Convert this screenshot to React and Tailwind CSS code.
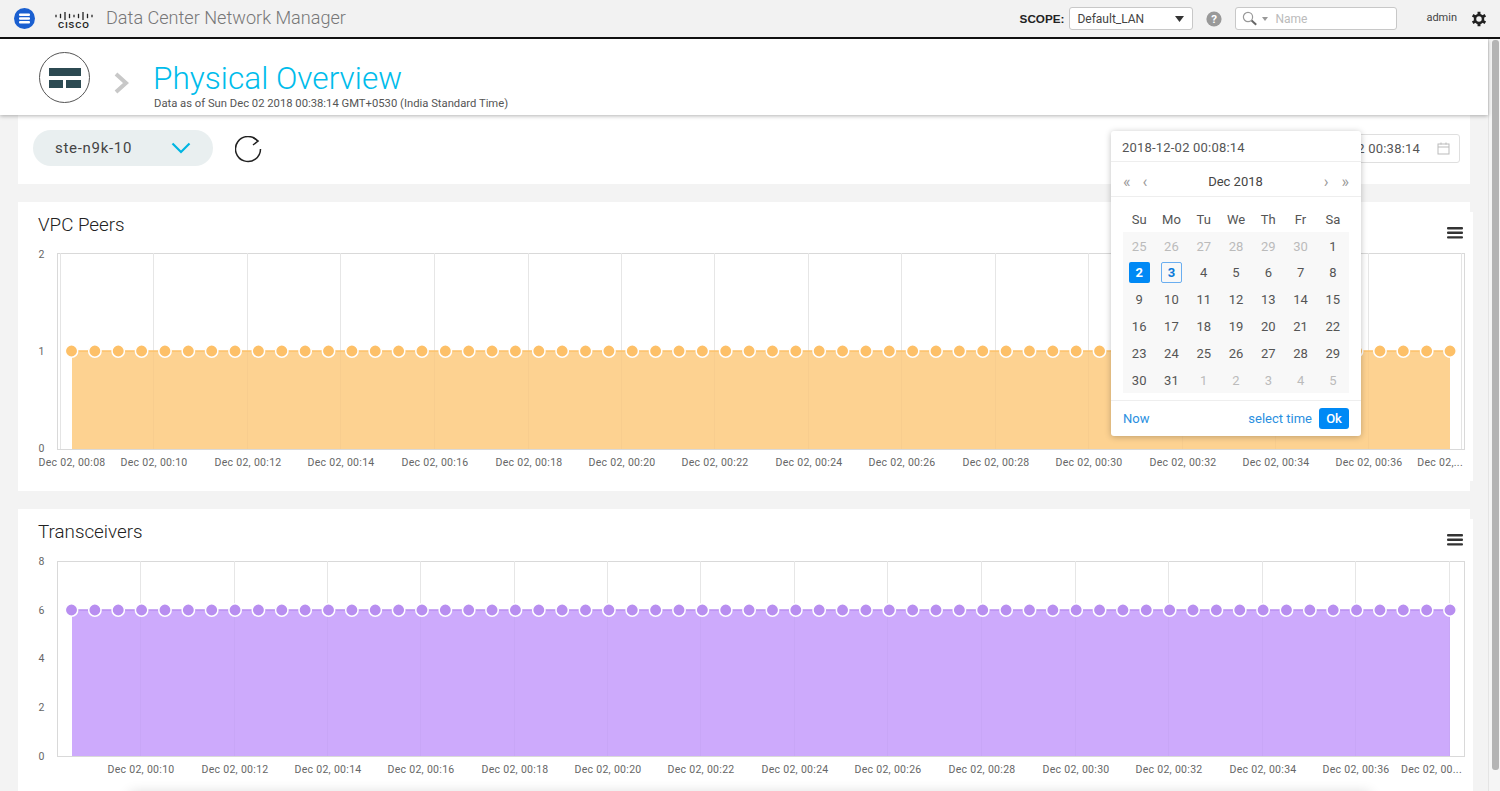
import React from "react";

const FONT = { fontFamily: "Roboto, 'Liberation Sans', sans-serif" };
const points = Array.from({ length: 60 }, (_, i) => 71.5 + i * 23.365);

const calendar = [
  [["25", 1], ["26", 1], ["27", 1], ["28", 1], ["29", 1], ["30", 1], ["1", 0]],
  [["2", 2], ["3", 3], ["4", 0], ["5", 0], ["6", 0], ["7", 0], ["8", 0]],
  [["9", 0], ["10", 0], ["11", 0], ["12", 0], ["13", 0], ["14", 0], ["15", 0]],
  [["16", 0], ["17", 0], ["18", 0], ["19", 0], ["20", 0], ["21", 0], ["22", 0]],
  [["23", 0], ["24", 0], ["25", 0], ["26", 0], ["27", 0], ["28", 0], ["29", 0]],
  [["30", 0], ["31", 0], ["1", 1], ["2", 1], ["3", 1], ["4", 1], ["5", 1]],
];

function Hamburger() {
  return (
    <svg width="16" height="12" viewBox="0 0 16 12" className="mt-[15px] mr-[10px] shrink-0">
      <rect x="0" y="0" width="16" height="2.4" rx="1" fill="#333" />
      <rect x="0" y="4.6" width="16" height="2.4" rx="1" fill="#333" />
      <rect x="0" y="9.2" width="16" height="2.4" rx="1" fill="#333" />
    </svg>
  );
}

function Chart({ title, viewY, height, top, bottom, lineY, yTicks, grid, labels, labelY, area, dot, innerLines }) {
  return (
    <section className="py-[10px] bg-white h-fit">
      <div className="w-[1455px] bg-white">
        <div className="h-[33px] flex justify-between pl-[20px]">
          <h2 className="text-[18.8px] font-light text-[#222] leading-[27px]">{title}</h2>
          <Hamburger />
        </div>
        <svg width="1455" height={height} viewBox={`18 ${viewY} 1455 ${height}`} className="block">
          <rect x="57.5" y={top + 0.5} width="1407" height={bottom - top} fill="#fff" stroke="#d9d9d9" />
          {innerLines && (
            <>
              <line x1="60.5" x2="60.5" y1={top} y2={bottom} stroke="#e4e4e4" />
              <line x1="1461.5" x2="1461.5" y1={top} y2={bottom} stroke="#e4e4e4" />
            </>
          )}
          {grid.map((x) => (
            <line key={x} x1={x + 0.5} x2={x + 0.5} y1={top} y2={bottom} stroke="#e6e6e6" />
          ))}
          <rect x="72" y={lineY} width="1378" height={bottom - lineY} fill={area} />
          {grid.map((x) => (
            <line key={`g${x}`} x1={x + 0.5} x2={x + 0.5} y1={lineY} y2={bottom} stroke="#000" strokeOpacity="0.02" />
          ))}
          <line x1="72" x2="1450" y1={lineY} y2={lineY} stroke={dot} strokeWidth="1.5" />
          {points.map((x) => (
            <circle key={x} cx={x} cy={lineY} r="6.2" fill={dot} stroke="#fff" strokeWidth="1.5" />
          ))}
          {yTicks.map(([t, y]) => (
            <text key={t} x="41.5" y={y + 3.5} textAnchor="middle" fill="#666" fontSize="10.5">
              {t}
            </text>
          ))}
          {labels.map(([t, x, anchor]) => (
            <text key={x} x={x} y={labelY} textAnchor={anchor || "middle"} fill="#666" fontSize="10.5" letterSpacing="0.3">
              {t}
            </text>
          ))}
        </svg>
      </div>
    </section>
  );
}

const grid1 = [153, 247, 340, 434, 528, 621, 714, 808, 901, 995, 1088, 1182, 1275, 1368];
const grid2 = [140, 234, 327, 420, 514, 607, 700, 794, 887, 981, 1075, 1168, 1262, 1355, 1449];
const times = ["00:10", "00:12", "00:14", "00:16", "00:18", "00:20", "00:22", "00:24", "00:26", "00:28", "00:30", "00:32", "00:34", "00:36"];

const labels1 = [
  ["Dec 02, 00:08", 72],
  ...times.map((t, i) => [`Dec 02, ${t}`, i === 13 ? 1369 : grid1[i] + 1]),
  ["Dec 02,...", 1463, "end"],
];
const labels2 = [
  ...times.map((t, i) => [`Dec 02, ${t}`, grid2[i] + 1]),
  ["Dec 02, 00...", 1462, "end"],
];

const ciscoBars = [2.6, 4.4, 8, 4.4, 2.6, 4.4, 8, 4.4, 2.6];

export default function App() {
  return (
    <div style={FONT} className="w-[1500px] h-[791px] overflow-hidden flex flex-col bg-[#f3f3f3] relative">
      <header className="h-[39px] shrink-0 bg-[#f2f2f2] border-b-2 border-[#111] flex items-center pl-[14px] pr-[13px]">
        <svg width="21" height="21" viewBox="0 0 21 21" className="shrink-0 mb-[1px]">
          <circle cx="10.5" cy="10.5" r="10.5" fill="#1a5fd0" />
          <rect x="5" y="5.500" width="11" height="2.500" rx="1" fill="#fff" />
          <rect x="5" y="9.300" width="11" height="2.500" rx="1" fill="#fff" />
          <rect x="5" y="13.100" width="11" height="2.500" rx="1" fill="#fff" />
        </svg>
        <div className="relative w-[40px] h-[24px] ml-[20px] shrink-0">
          <svg width="38" height="12" viewBox="0 0 38 12" className="absolute left-0 top-[3px]">
            {ciscoBars.map((h, i) => (
              <line key={i} x1={1 + i * 4.5} x2={1 + i * 4.5} y1={6 - h / 2} y2={6 + h / 2} stroke="#222" strokeWidth="1.3" />
            ))}
          </svg>
          <span className="absolute left-[3px] top-[13px] text-[8.5px] leading-[10px] font-bold text-[#222] tracking-[1px]" style={{ fontFamily: "'Liberation Sans', sans-serif" }}>
            CISCO
          </span>
        </div>
        <span className="ml-[11px] text-[18.1px] font-light text-[#777] leading-none">Data Center Network Manager</span>
        <div className="ml-auto flex items-center">
          <span className="text-[11.7px] font-bold text-[#222]" style={{ fontFamily: "'Liberation Sans', sans-serif" }}>SCOPE:</span>
          <div className="ml-[5px] w-[124px] h-[23px] bg-white border border-[#c8c8c8] rounded-[3px] flex items-center justify-between pl-[7px] pr-[8px]">
            <span className="text-[12px] text-[#444]">Default_LAN</span>
            <svg width="9" height="6" viewBox="0 0 9 6"><path d="M0 0h9L4.500 6z" fill="#333" /></svg>
          </div>
          <svg width="16" height="16" viewBox="0 0 16 16" className="ml-[13px]">
            <circle cx="8" cy="8" r="7.600" fill="#999" />
            <text x="8" y="12" textAnchor="middle" fontSize="11.5" fontWeight="700" fill="#fff">?</text>
          </svg>
          <div className="ml-[13px] w-[162px] h-[23px] bg-white border border-[#c8c8c8] rounded-[3px] flex items-center pl-[6px]">
            <svg width="16" height="16" viewBox="0 0 16 16">
              <circle cx="6" cy="6" r="4.600" fill="none" stroke="#999" strokeWidth="1.2" />
              <path d="M9.600 9.600l4.600 4.200" stroke="#666" strokeWidth="2" />
            </svg>
            <svg width="6" height="4" viewBox="0 0 6 4" className="ml-[4px]"><path d="M0 0h6L3 4z" fill="#999" /></svg>
            <span className="ml-[7px] text-[12px] text-[#bbb]">Name</span>
          </div>
          <span className="ml-[29px] text-[11px] text-[#444]">admin</span>
          <svg width="16" height="16" viewBox="0 0 24 24" className="ml-[14px]" fill="none" stroke="#222">
            <circle cx="12" cy="12" r="6" strokeWidth="3.800" />
            <path d="M12 1v5M12 18v5M2.500 6.500l4.300 2.500M17.200 15l4.300 2.500M2.500 17.500L6.800 15M17.200 9l4.300-2.500" strokeWidth="4.400" />
          </svg>
        </div>
      </header>

      <div className="flex-1 flex overflow-hidden">
        <main className="w-[1488px] shrink-0 flex flex-col relative">
          <div className="h-[76px] shrink-0 bg-white shadow-[0_1px_4px_rgba(0,0,0,0.3)] flex relative z-10 pl-[39px]">
            <div className="w-[51px] h-[51px] mt-[13px] rounded-full border border-[#555] flex flex-col items-center justify-center gap-[4px] shrink-0">
              <div className="w-[32px] h-[8px] bg-[#2c4a52]" />
              <div className="flex gap-[3px]">
                <div className="w-[14px] h-[8px] bg-[#2c4a52]" />
                <div className="w-[15px] h-[8px] bg-[#2c4a52]" />
              </div>
            </div>
            <svg width="16" height="22" viewBox="0 0 16 22" className="ml-[24px] mt-[33px] shrink-0">
              <path d="M2 2l10 9-10 9" fill="none" stroke="#c8c8c8" strokeWidth="4" />
            </svg>
            <div className="ml-[23px] pt-[21px]">
              <h1 className="text-[31.6px] font-light leading-[38px] text-[#00bceb]">Physical Overview</h1>
              <p className="ml-[1px] text-[11.25px] leading-[12px] text-[#555]">Data as of Sun Dec 02 2018 00:38:14 GMT+0530 (India Standard Time)</p>
            </div>
          </div>

          <div className="pl-[18px] w-[1470px] flex flex-col gap-[18px]">
            <section className="h-[69px] bg-white flex items-start relative">
              <div className="ml-[15px] mt-[15px] w-[180px] h-[36px] rounded-full bg-[#e9eff0] flex items-center justify-between pl-[22px] pr-[22px]">
                <span className="text-[15px] text-[#444] tracking-[0.7px]">ste-n9k-10</span>
                <svg width="20" height="12" viewBox="0 0 20 12"><path d="M1.500 1.500L10 10l8.500-8.500" fill="none" stroke="#00b5e2" strokeWidth="2.2" /></svg>
              </div>
              <svg width="28" height="28" viewBox="0 0 28 28" className="ml-[22px] mt-[21px]" fill="none" stroke="#222" strokeWidth="1.5">
                <path d="M23 5.500A12.500 12.500 0 1 0 25.500 13" />
                <path d="M18 1.500L23 5l-5 4" />
              </svg>
              <div className="absolute right-[10px] top-[19px] w-[330px] h-[29px] bg-white border border-[#dfdfdf] rounded-[3px] flex items-center justify-end pr-[9px]">
                <span className="text-[13px] text-[#555] tracking-[0.2px]">2018-12-02 00:38:14</span>
                <svg width="13" height="13" viewBox="0 0 13 13" className="ml-[17px]" fill="none" stroke="#bbb">
                  <rect x="1" y="2" width="11" height="10" />
                  <path d="M1 5h11M4 0.500v2M9 0.500v2" />
                </svg>
              </div>
              <div className="absolute left-[1093px] top-[16px] w-[250px] h-[305px] bg-white rounded-[3px] shadow-[0_1px_6px_rgba(0,0,0,0.25)] z-20 flex flex-col">
                <div className="h-[31px] border-b border-[#eee] pl-[11px] pt-[4px] flex items-center text-[13px] text-[#555] tracking-[0.2px]">2018-12-02 00:08:14</div>
                <div className="h-[35px] border-b border-[#eee] flex items-center px-[12px] pt-[5px] text-[13px]">
                  <span className="text-[#999] text-[16px] leading-none">«</span>
                  <span className="text-[#999] text-[16px] leading-none ml-[12px]">‹</span>
                  <span className="flex-1 text-center text-[#444]">Dec 2018</span>
                  <span className="text-[#999] text-[16px] leading-none mr-[13px]">›</span>
                  <span className="text-[#999] text-[16px] leading-none">»</span>
                </div>
                <div className="mx-[12px] grid grid-cols-7 h-[35px] pt-[11px] items-center text-center text-[13px] text-[#555]">
                  {["Su", "Mo", "Tu", "We", "Th", "Fr", "Sa"].map((d) => <span key={d}>{d}</span>)}
                </div>
                <div className="mx-[12px] bg-[#f8f8f8] grid grid-cols-7 auto-rows-[26.8px] text-center text-[13px]">
                  {calendar.flat().map(([d, k], i) => (
                    <div key={i} className="flex items-center justify-center">
                      {k === 2 ? (
                        <span className="w-[21px] h-[21px] pt-[1px] rounded-[2px] bg-[#0089f5] text-white font-bold flex items-center justify-center">{d}</span>
                      ) : k === 3 ? (
                        <span className="w-[21px] h-[21px] pt-[1px] rounded-[2px] border border-[#6aaef0] text-[#0a78d8] font-bold flex items-center justify-center">{d}</span>
                      ) : (
                        <span className={k === 1 ? "text-[#bbb] pt-[2px]" : "text-[#555] pt-[2px]"}>{d}</span>
                      )}
                    </div>
                  ))}
                </div>
                <div className="mt-[7px] flex-1 border-t border-[#eee] flex items-center pl-[12px] pr-[12px] text-[13px]">
                  <span className="text-[#2a8fe0]">Now</span>
                  <span className="ml-auto text-[#2a8fe0]">select time</span>
                  <span className="ml-[7px] w-[30px] h-[21px] rounded-[3px] bg-[#0089f5] text-white font-medium flex items-center justify-center">Ok</span>
                </div>
              </div>
            </section>

            <Chart
              title="VPC Peers"
              viewY={245}
              height={236}
              top={253}
              bottom={449}
              lineY={351}
              yTicks={[["2", 254], ["1", 351], ["0", 448]]}
              grid={grid1}
              labels={labels1}
              labelY={466}
              area="#fdd291"
              dot="#fdc068"
              innerLines
            />
            <Chart
              title="Transceivers"
              viewY={552}
              height={239}
              top={561}
              bottom={756}
              lineY={610}
              yTicks={[["8", 561], ["6", 610], ["4", 658], ["2", 707], ["0", 756]]}
              grid={grid2}
              labels={labels2}
              labelY={773}
              area="#cdaafc"
              dot="#b88ef0"
            />
          </div>
        </main>
        <div className="w-[12px] shrink-0 bg-[#f5f5f5] border-l border-[#e4e4e4] pl-[3px] pt-[1px]">
          <div className="w-[7px] h-[730px] rounded-[3px] bg-[#b4b4b4]" />
        </div>
      </div>
      <div className="absolute left-[130px] top-[796px] w-[1240px] h-[10px] shadow-[0_-2px_14px_rgba(0,0,0,0.2)]" />
    </div>
  );
}
